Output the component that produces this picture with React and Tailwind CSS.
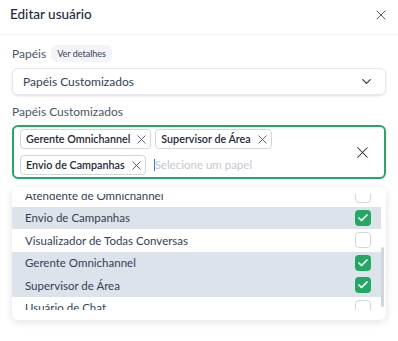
import { X, ChevronDown, Check } from "lucide-react";

const options = [
    { label: "Atendente de Omnichannel", checked: false },
    { label: "Envio de Campanhas", checked: true },
    { label: "Visualizador de Todas Conversas", checked: false },
    { label: "Gerente Omnichannel", checked: true },
    { label: "Supervisor de Área", checked: true },
    { label: "Usuário de Chat", checked: false },
];

function Tag({ label }) {
    return (
        <div className="h-[20px] flex items-center gap-[4px] pl-[5px] pr-[1px] border border-gray-300 rounded-[4px] bg-white text-[10.75px] leading-none text-[#1f2937] font-semibold">
            <span>{label}</span>
            <X size={15} strokeWidth={1.4} className="text-gray-600" />
        </div>
    );
}

function App() {
    return (
        <div className="w-[398px] h-[341px] bg-white overflow-hidden text-[#1f2937]" style={{ fontFamily: "Lato, 'Noto Sans', sans-serif" }}>

            {/* Header */}
            <div className="h-[35px] flex items-center justify-between pb-[5px] pl-[10px] pr-[9px] border-b border-gray-100">
                <h1 className="text-[13.5px] leading-none font-medium text-[#1e293b]">Editar usuário</h1>
                <X size={16} strokeWidth={1.3} className="text-gray-700" />
            </div>

            <div className="px-[12px]">

                {/* Papéis */}
                <div className="mt-[10px] h-[17px] flex items-center gap-[5px]">
                    <span className="text-[12px] leading-none text-gray-600">Papéis</span>
                    <span className="px-[6px] h-[17px] flex items-center rounded-md bg-gray-100 text-[9px] text-gray-700">Ver detalhes</span>
                </div>

                <div className="mt-[6px] h-[27px] border border-gray-200 rounded-md shadow-sm flex items-center justify-between pl-[10px] pr-[11px]">
                    <span className="text-[12px] leading-none text-[#334155]">Papéis Customizados</span>
                    <ChevronDown size={15} strokeWidth={2} className="text-gray-700" />
                </div>

                {/* Papéis Customizados */}
                <div className="mt-[9px] h-[16px] flex items-center text-[12px] leading-none text-gray-600">Papéis Customizados</div>

                <div className="mt-[5px] h-[54px] border-2 border-[#22a862] rounded-md flex items-center pl-[6px] pr-[12px]">
                    <div className="flex-1 flex flex-col gap-[6px]">
                        <div className="flex gap-[4px]">
                            <Tag label="Gerente Omnichannel" />
                            <Tag label="Supervisor de Área" />
                        </div>
                        <div className="flex items-center gap-[8px]">
                            <Tag label="Envio de Campanhas" />
                            <span className="text-[11.5px] text-[#c4c9d1] border-l border-blue-500 leading-none">Selecione um papel</span>
                        </div>
                    </div>
                    <X size={19} strokeWidth={1.3} className="text-gray-800" />
                </div>

                {/* Dropdown */}
                <div className="mt-[8px] h-[133px] rounded-md bg-white shadow-[0_2px_8px_rgba(0,0,0,0.12)] pt-[7px] pb-[10px] flex">
                    <div className="flex-1 overflow-hidden">
                        <div className="-mt-[10px]">
                            {options.map((o) => (
                                <div key={o.label} className={`h-[22.5px] flex items-center justify-between pl-[13px] pr-[10px] text-[11.5px] text-[#334155] ${o.checked ? "bg-[#dde3ea]" : ""}`}>
                                    <span>{o.label}</span>
                                    {o.checked ? (
                                        <div className="w-[16px] h-[16px] rounded-[4px] bg-[#22a862] flex items-center justify-center">
                                            <Check size={12} strokeWidth={3.5} className="text-white" />
                                        </div>
                                    ) : (
                                        <div className="w-[16px] h-[16px] rounded-[4px] border border-gray-300 bg-white" />
                                    )}
                                </div>
                            ))}
                        </div>
                    </div>
                    <div className="w-[5px] flex flex-col pr-[1px]">
                        <div className="mt-[53px] h-[60px] w-[3px] rounded-full bg-gray-300" />
                    </div>
                </div>
            </div>
        </div>
    );
}

export default App;
